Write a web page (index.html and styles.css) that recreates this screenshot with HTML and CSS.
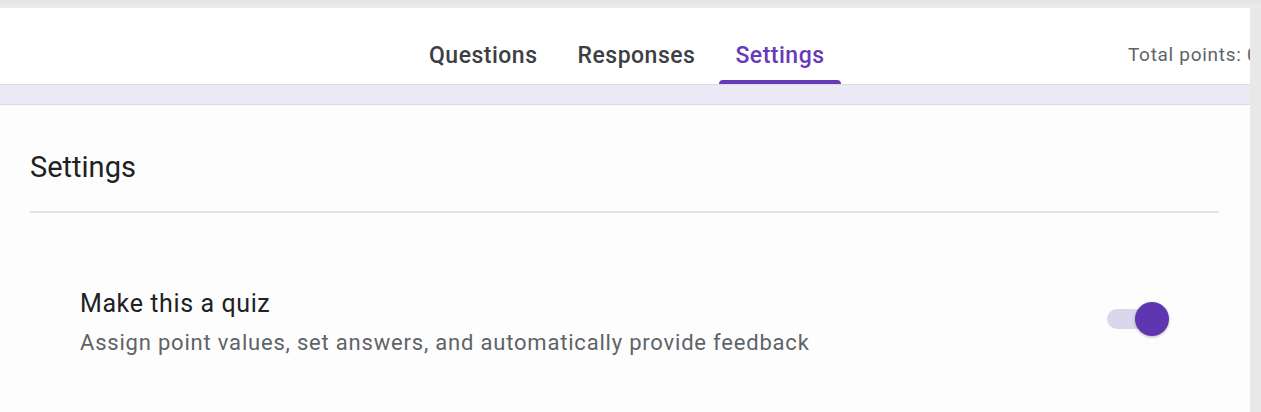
FILE: index.html
```html
<!DOCTYPE html>
<html lang="en">
<head>
<meta charset="utf-8">
<title>Settings</title>
<link rel="stylesheet" href="styles.css">
</head>
<body>
<div class="frame">
  <div class="page">
    <header class="header">
      <nav class="tabs">
        <a class="tab">Questions</a>
        <a class="tab">Responses</a>
        <a class="tab active">Settings</a>
      </nav>
      <div class="points">Total points: 0</div>
    </header>
    <div class="band"></div>
    <main class="content">
      <h1 class="title">Settings</h1>
      <div class="divider"></div>
      <div class="row">
        <div class="row-text">
          <div class="row-title">Make this a quiz</div>
          <div class="row-desc">Assign point values, set answers, and automatically provide feedback</div>
        </div>
        <div class="switch"><span class="track"></span><span class="thumb"></span></div>
      </div>
    </main>
  </div>
  <div class="edge"></div>
</div>
</body>
</html>
```
FILE: styles.css
```css
* { box-sizing: border-box; }
html, body { margin: 0; height: 100%; }
body {
  background: #e9e9e9;
  font-family: Roboto, "Noto Sans", Arial, sans-serif;
  overflow: hidden;
}
.frame {
  display: flex;
  height: 412px;
  padding-top: 8px;
  background: linear-gradient(#e4e4e4, #ececec 8px);
}
.page {
  width: 1250px;
  flex: none;
  background: #fdfdfd;
  display: flex;
  flex-direction: column;
}
.edge {
  flex: 1;
  background: #e8e8e8;
}
.header {
  height: 77px;
  background: #fff;
  display: flex;
  align-items: flex-end;
  position: relative;
  border-bottom: 1px solid #dcdce0;
  overflow: hidden;
}
.tabs {
  display: flex;
  margin-left: 409px;
}
.tab {
  position: relative;
  padding: 0 20px;
  height: 41px;
  font-size: 23px;
  line-height: 26px;
  font-weight: 500;
  color: #3c4043;
  letter-spacing: 0.5px;
  white-space: nowrap;
}
.tab.active { color: #673ab7; }
.tab.active::after {
  content: "";
  position: absolute;
  left: 4px;
  right: 4px;
  bottom: 0;
  height: 4px;
  border-radius: 4px 4px 0 0;
  background: #673ab7;
}
.points {
  position: absolute;
  left: 1128px;
  top: 35px;
  font-size: 19px;
  letter-spacing: 0.7px;
  color: #5f6368;
  white-space: nowrap;
}
.band {
  height: 20px;
  background: #ede8f6;
  border-bottom: 1px solid #dcdce0;
}
.content {
  flex: 1;
  padding: 0 31px 0 30px;
}
.title {
  margin: 42px 0 0;
  font-size: 29px;
  font-weight: 400;
  color: #202124;
  line-height: 40px;
}
.divider {
  margin-top: 24px;
  height: 2px;
  background: #e3e3e7;
}
.row {
  display: flex;
  align-items: flex-start;
  padding: 76px 50px 0 50px;
}
.row-text { flex: 1; }
.row-title {
  font-size: 25px;
  color: #202124;
  line-height: 30px;
  letter-spacing: 0.6px;
}
.row-desc {
  margin-top: 11px;
  font-size: 22px;
  color: #5f6368;
  line-height: 26px;
  letter-spacing: 0.8px;
  white-space: nowrap;
}
.switch {
  position: relative;
  width: 62px;
  height: 34px;
  margin-top: 13px;
}
.track {
  position: absolute;
  left: 0;
  top: 7px;
  width: 42px;
  height: 20px;
  border-radius: 10px;
  background: #dcd6ec;
}
.thumb {
  position: absolute;
  left: 28px;
  top: 0;
  width: 34px;
  height: 34px;
  border-radius: 50%;
  background: #5e37b0;
  box-shadow: 0 1px 3px rgba(0,0,0,0.3);
}
```
